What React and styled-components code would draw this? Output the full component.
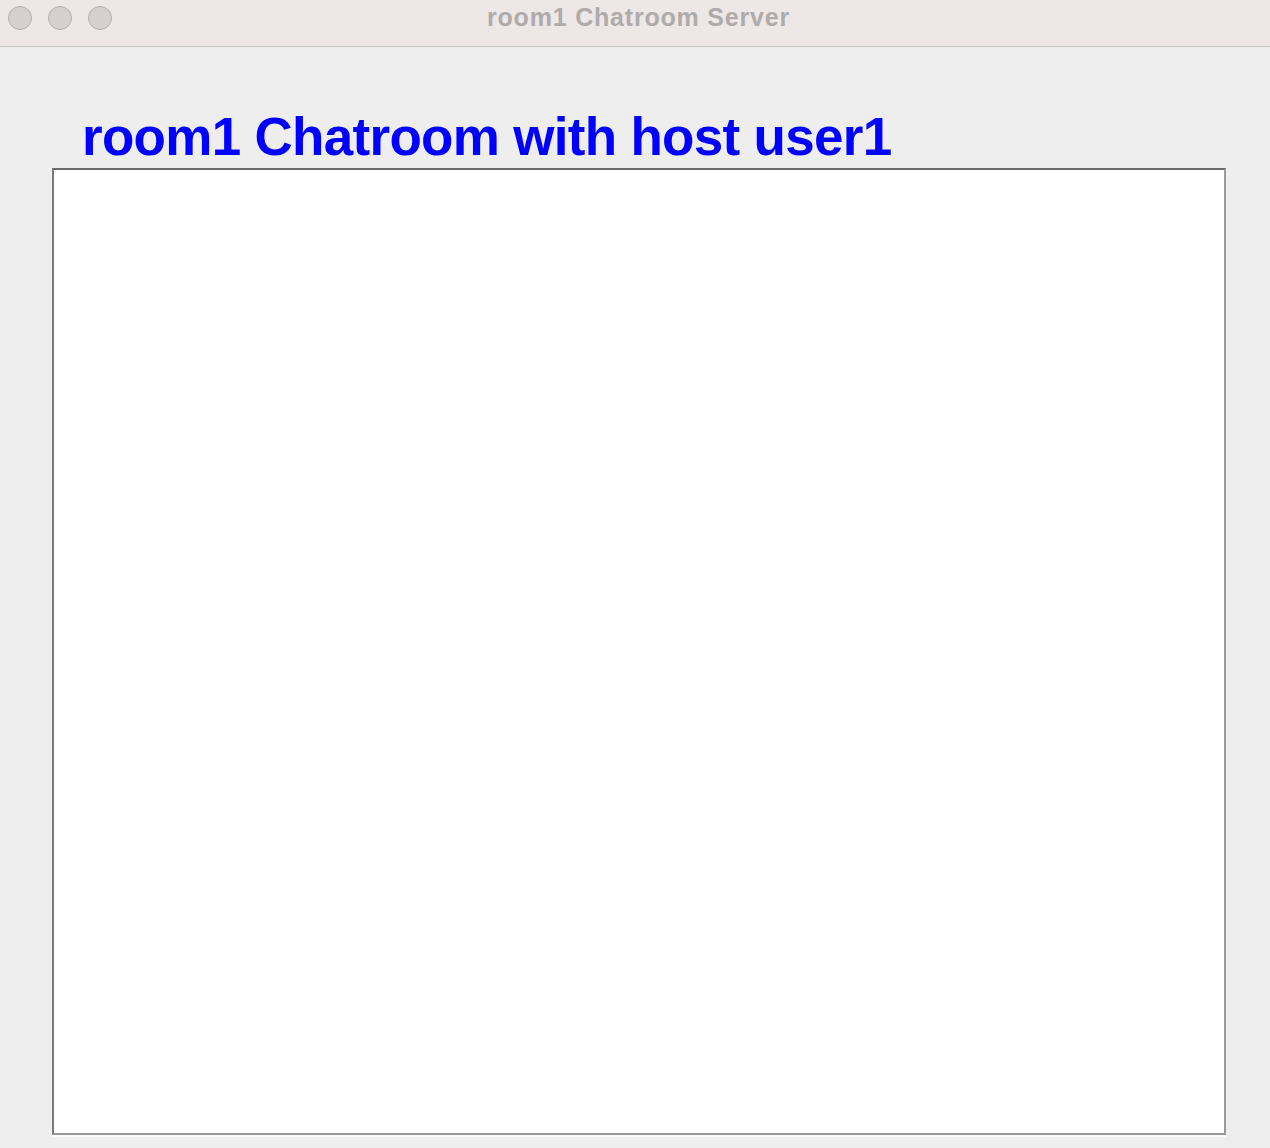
import React from "react";
import styled, { createGlobalStyle } from "styled-components";

const Global = createGlobalStyle`
  html, body { margin: 0; padding: 0; background: #eeeeee; }
  body { font-family: "Liberation Sans", Arial, sans-serif; }
`;

const Window = styled.div`
  width: 1270px;
  height: 1148px;
  display: flex;
  flex-direction: column;
  background: #eeeeee;
  overflow: hidden;
`;

const TitleBar = styled.div`
  position: relative;
  height: 47px;
  box-sizing: border-box;
  border-bottom: 1px solid #c9c5c5;
  background: #ede7e7;
  display: flex;
  align-items: center;
  justify-content: center;
`;

const Lights = styled.div`
  position: absolute;
  left: 8px;
  top: 6px;
  display: flex;
  gap: 16px;
`;

const Light = styled.span`
  width: 22px;
  height: 22px;
  border-radius: 50%;
  background: #d5cfcf;
  border: 1px solid #b5afaf;
`;

const WindowTitle = styled.div`
  font-family: "Liberation Sans", Arial, sans-serif;
  font-weight: bold;
  font-size: 25px;
  letter-spacing: 0.8px;
  color: #b0abab;
  margin-top: -12px;
  margin-left: 7px;
`;

const Content = styled.div`
  flex: 1;
  display: flex;
  flex-direction: column;
  padding: 59px 44px 13px 52px;
`;

const Heading = styled.h1`
  margin: 0 0 0 30px;
  font-family: "Liberation Sans", Arial, sans-serif;
  font-weight: bold;
  font-size: 53px;
  letter-spacing: -0.7px;
  line-height: 62px;
  color: #0000ff;
`;

const ChatArea = styled.div`
  flex: 1;
  background: #ffffff;
  border-style: solid;
  border-width: 2px;
  border-color: #6c6c6c #9a9a9a #9a9a9a #7a7a7a;
  box-shadow: 0 2px 0 #fafafa;
`;

export default function App() {
  return (
    <>
      <Global />
      <Window>
        <TitleBar>
          <Lights>
            <Light />
            <Light />
            <Light />
          </Lights>
          <WindowTitle>room1 Chatroom Server</WindowTitle>
        </TitleBar>
        <Content>
          <Heading>room1 Chatroom with host user1</Heading>
          <ChatArea />
        </Content>
      </Window>
    </>
  );
}
